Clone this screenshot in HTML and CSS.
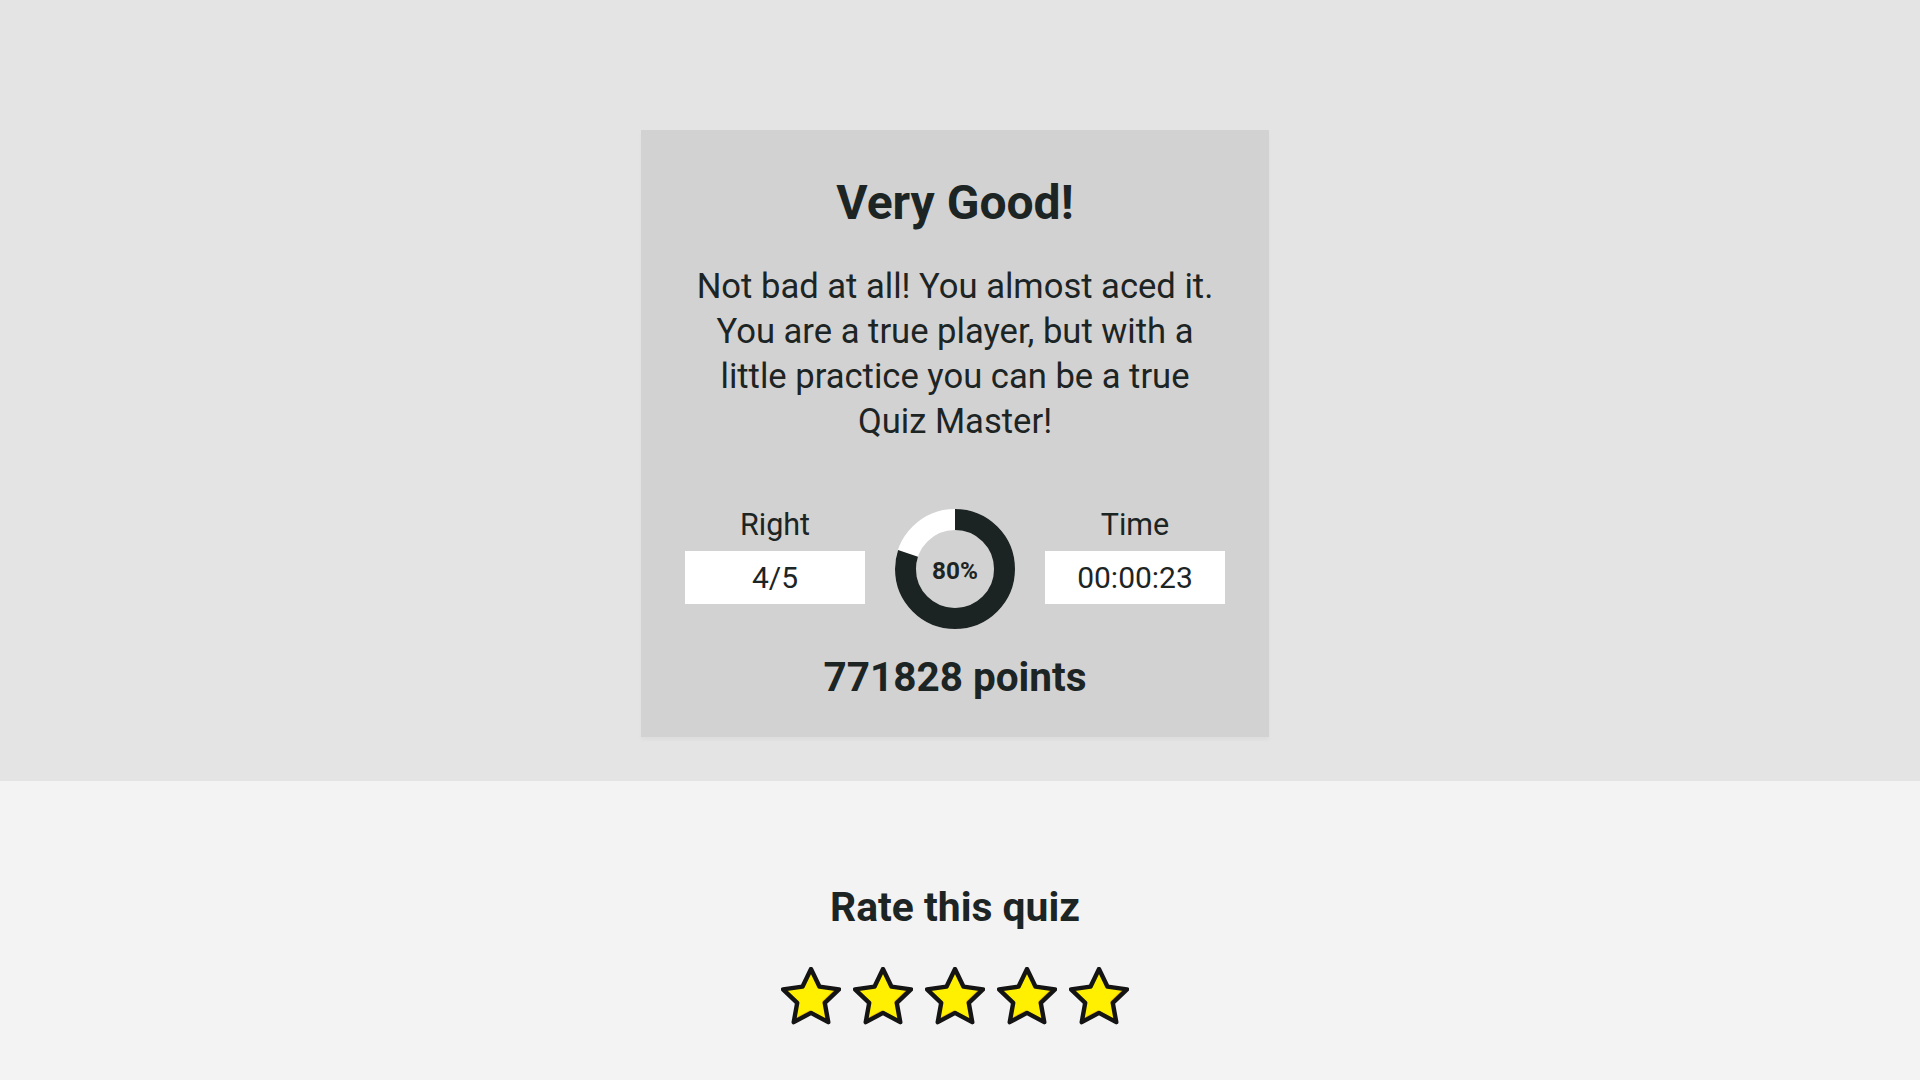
FILE: index.html
```html
<!DOCTYPE html>
<html lang="en">
<head>
<meta charset="utf-8">
<title>Quiz result</title>
<link rel="stylesheet" href="styles.css">
</head>
<body>
<svg class="defs" width="0" height="0" aria-hidden="true">
  <symbol id="star" viewBox="0 0 60 58">
    <path fill="#efc100" d="M30 2 L38.52 19.67 L57.96 22.32 L43.79 35.88 L47.28 55.18 L30 45.9 L12.72 55.18 L16.21 35.88 L2.04 22.32 L21.48 19.67 Z"/>
    <path fill="#ffef00" transform="translate(-1.3 -1.3) translate(30 31.4) scale(0.9) translate(-30 -31.4)" d="M30 2 L38.52 19.67 L57.96 22.32 L43.79 35.88 L47.28 55.18 L30 45.9 L12.72 55.18 L16.21 35.88 L2.04 22.32 L21.48 19.67 Z"/>
    <path fill="none" stroke="#141414" stroke-width="4.4" stroke-linejoin="round" d="M30 2 L38.52 19.67 L57.96 22.32 L43.79 35.88 L47.28 55.18 L30 45.9 L12.72 55.18 L16.21 35.88 L2.04 22.32 L21.48 19.67 Z"/>
  </symbol>
</svg>

<section class="top">
  <div class="card">
    <h1 class="title">Very Good!</h1>
    <p class="message">Not bad at all! You almost aced it. You are a true player, but with a little practice you can be a true Quiz Master!</p>
    <div class="stats">
      <div class="stat">
        <div class="stat-label">Right</div>
        <div class="stat-value">4/5</div>
      </div>
      <div class="donut">
        <svg class="donut-svg" width="120" height="120" viewBox="0 0 120 120">
          <circle cx="60" cy="60" r="49.5" fill="none" stroke="#ffffff" stroke-width="21"/>
          <circle cx="60" cy="60" r="49.5" fill="none" stroke="#1c2423" stroke-width="21" stroke-dasharray="248.8 400" transform="rotate(-90 60 60)"/>
        </svg>
        <span class="donut-text">80%</span>
      </div>
      <div class="stat">
        <div class="stat-label">Time</div>
        <div class="stat-value">00:00:23</div>
      </div>
    </div>
    <div class="points">771828 points</div>
  </div>
</section>

<section class="bottom">
  <h2 class="rate-title">Rate this quiz</h2>
  <div class="stars">
    <svg class="star" viewBox="0 0 60 58"><use href="#star"/></svg>
    <svg class="star" viewBox="0 0 60 58"><use href="#star"/></svg>
    <svg class="star" viewBox="0 0 60 58"><use href="#star"/></svg>
    <svg class="star" viewBox="0 0 60 58"><use href="#star"/></svg>
    <svg class="star" viewBox="0 0 60 58"><use href="#star"/></svg>
  </div>
</section>
</body>
</html>
```

FILE: styles.css
```css
html, body {
  margin: 0;
  padding: 0;
}

body {
  font-family: Roboto, "Liberation Sans", sans-serif;
  color: #1d2424;
  display: flex;
  flex-direction: column;
  min-height: 100vh;
}

.defs {
  position: absolute;
  width: 0;
  height: 0;
  overflow: hidden;
}

.top {
  background: #e4e4e4;
  padding: 130px 10px 44px 0;
  display: flex;
  justify-content: center;
}

.card {
  width: 628px;
  box-sizing: border-box;
  background: #d2d2d2;
  padding: 45px 44px 36px;
  display: flex;
  flex-direction: column;
  align-items: center;
  box-shadow: 0 3px 4px rgba(0, 0, 0, 0.03);
}

.title {
  margin: 0;
  font-size: 48px;
  line-height: 56px;
  font-weight: 700;
  text-align: center;
}

.message {
  margin: 33px 0 0;
  width: 530px;
  font-size: 34.6px;
  line-height: 45px;
  font-weight: 400;
  text-align: center;
}

.stats {
  margin-top: 63px;
  display: flex;
  align-items: flex-start;
  gap: 30px;
}

.stat {
  width: 180px;
  display: flex;
  flex-direction: column;
  align-items: center;
}

.stat-label {
  font-size: 30.5px;
  line-height: 36px;
}

.stat-value {
  margin-top: 8px;
  width: 180px;
  height: 53px;
  background: #ffffff;
  font-size: 30px;
  line-height: 53px;
  text-align: center;
}

.donut {
  margin-top: 2px;
  width: 120px;
  height: 120px;
  display: grid;
  place-items: center;
}

.donut-svg,
.donut-text {
  grid-area: 1 / 1;
}

.donut-svg {
  display: block;
}

.donut-text {
  margin-top: 5px;
  font-size: 24.3px;
  font-weight: 700;
  line-height: 1;
}

.points {
  margin-top: 24px;
  font-size: 40.5px;
  line-height: 48px;
  font-weight: 700;
}

.bottom {
  flex: 1;
  background: #f3f3f3;
  padding: 102px 10px 0 0;
  display: flex;
  flex-direction: column;
  align-items: center;
}

.rate-title {
  margin: 0;
  font-size: 40.8px;
  line-height: 48px;
  font-weight: 700;
}

.stars {
  margin-top: 36px;
  display: flex;
  gap: 12px;
}

.star {
  width: 60px;
  height: 58px;
  display: block;
}
```
